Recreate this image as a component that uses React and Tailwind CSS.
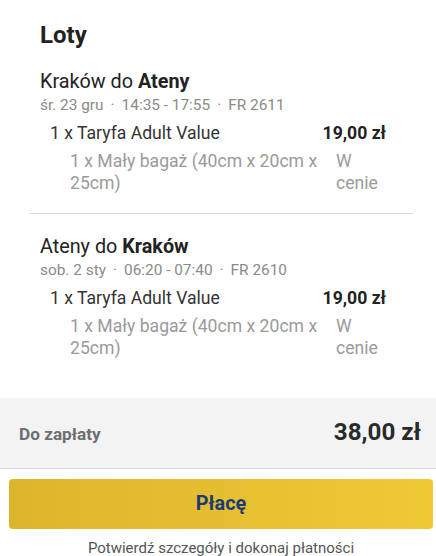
import React from 'react';

const flights = [
  {
    from: 'Kraków',
    to: 'Ateny',
    meta: ['śr. 23 gru', '14:35 - 17:55', 'FR 2611'],
  },
  {
    from: 'Ateny',
    to: 'Kraków',
    meta: ['sob. 2 sty', '06:20 - 07:40', 'FR 2610'],
  },
];

const FlightSection = ({ flight, first }) => (
  <div className={first ? 'pb-[19px]' : 'border-t border-[#dcdcdc] pt-[20px]'}>
    <div className="pl-[11px] text-[19.8px] leading-[26px] text-[#222]">
      {flight.from} do <span className="font-bold">{flight.to}</span>
    </div>
    <div className="pl-[11px] text-[15.4px] leading-[20px] text-[#8a8a8a]">
      {flight.meta[0]}
      <span className="mx-[7px]">·</span>
      {flight.meta[1]}
      <span className="mx-[7px]">·</span>
      {flight.meta[2]}
    </div>
    <div className="flex justify-between pl-[21px] pr-[27px] pt-[6px] text-[17.6px] leading-[24px] text-[#333]">
      <span>1 x Taryfa Adult Value</span>
      <span className="font-bold text-[#222]">19,00 zł</span>
    </div>
    <div className="flex pl-[41px] pr-[27px] pt-[5px] text-[17.6px] leading-[22px] text-[#9a9a9a]">
      <span className="w-[256px]">1 x Mały bagaż (40cm x 20cm x 25cm)</span>
      <span className="ml-[10px] w-[50px]">W cenie</span>
    </div>
  </div>
);

export default function App() {
  return (
    <div className="w-[436px] h-[556px] overflow-hidden bg-white font-['Roboto',sans-serif]">
      <div className="w-[442px] flex flex-col">
        <div className="h-[398px] px-[29px]">
          <h1 className="pl-[11px] pt-[20px] text-[24px] leading-[30px] font-bold text-[#222]">Loty</h1>
          <div className="pt-[19px]">
            {flights.map((f, i) => (
              <FlightSection key={i} flight={f} first={i === 0} />
            ))}
          </div>
        </div>
        <div className="h-[71px] bg-[#f3f3f3] border-b border-[#dcdcdc] flex items-baseline justify-between pt-[19px] pl-[19px] pr-[21px]">
          <span className="text-[17.2px] leading-[30px] font-bold text-[#6e6e70]">Do zapłaty</span>
          <span className="text-[24.2px] leading-[30px] font-bold text-[#2a2a2a]">38,00 zł</span>
        </div>
        <div className="px-[9px] pt-[10px]">
          <button className="w-full h-[50px] rounded-[4px] bg-gradient-to-r from-[#dcb52c] to-[#f0c935] text-[19.8px] font-bold text-[#1c3b76]">
            Płacę
          </button>
        </div>
        <p className="text-center text-[15px] leading-[20px] text-[#555] pt-[9px]">
          Potwierdź szczegóły i dokonaj płatności
        </p>
      </div>
    </div>
  );
}
